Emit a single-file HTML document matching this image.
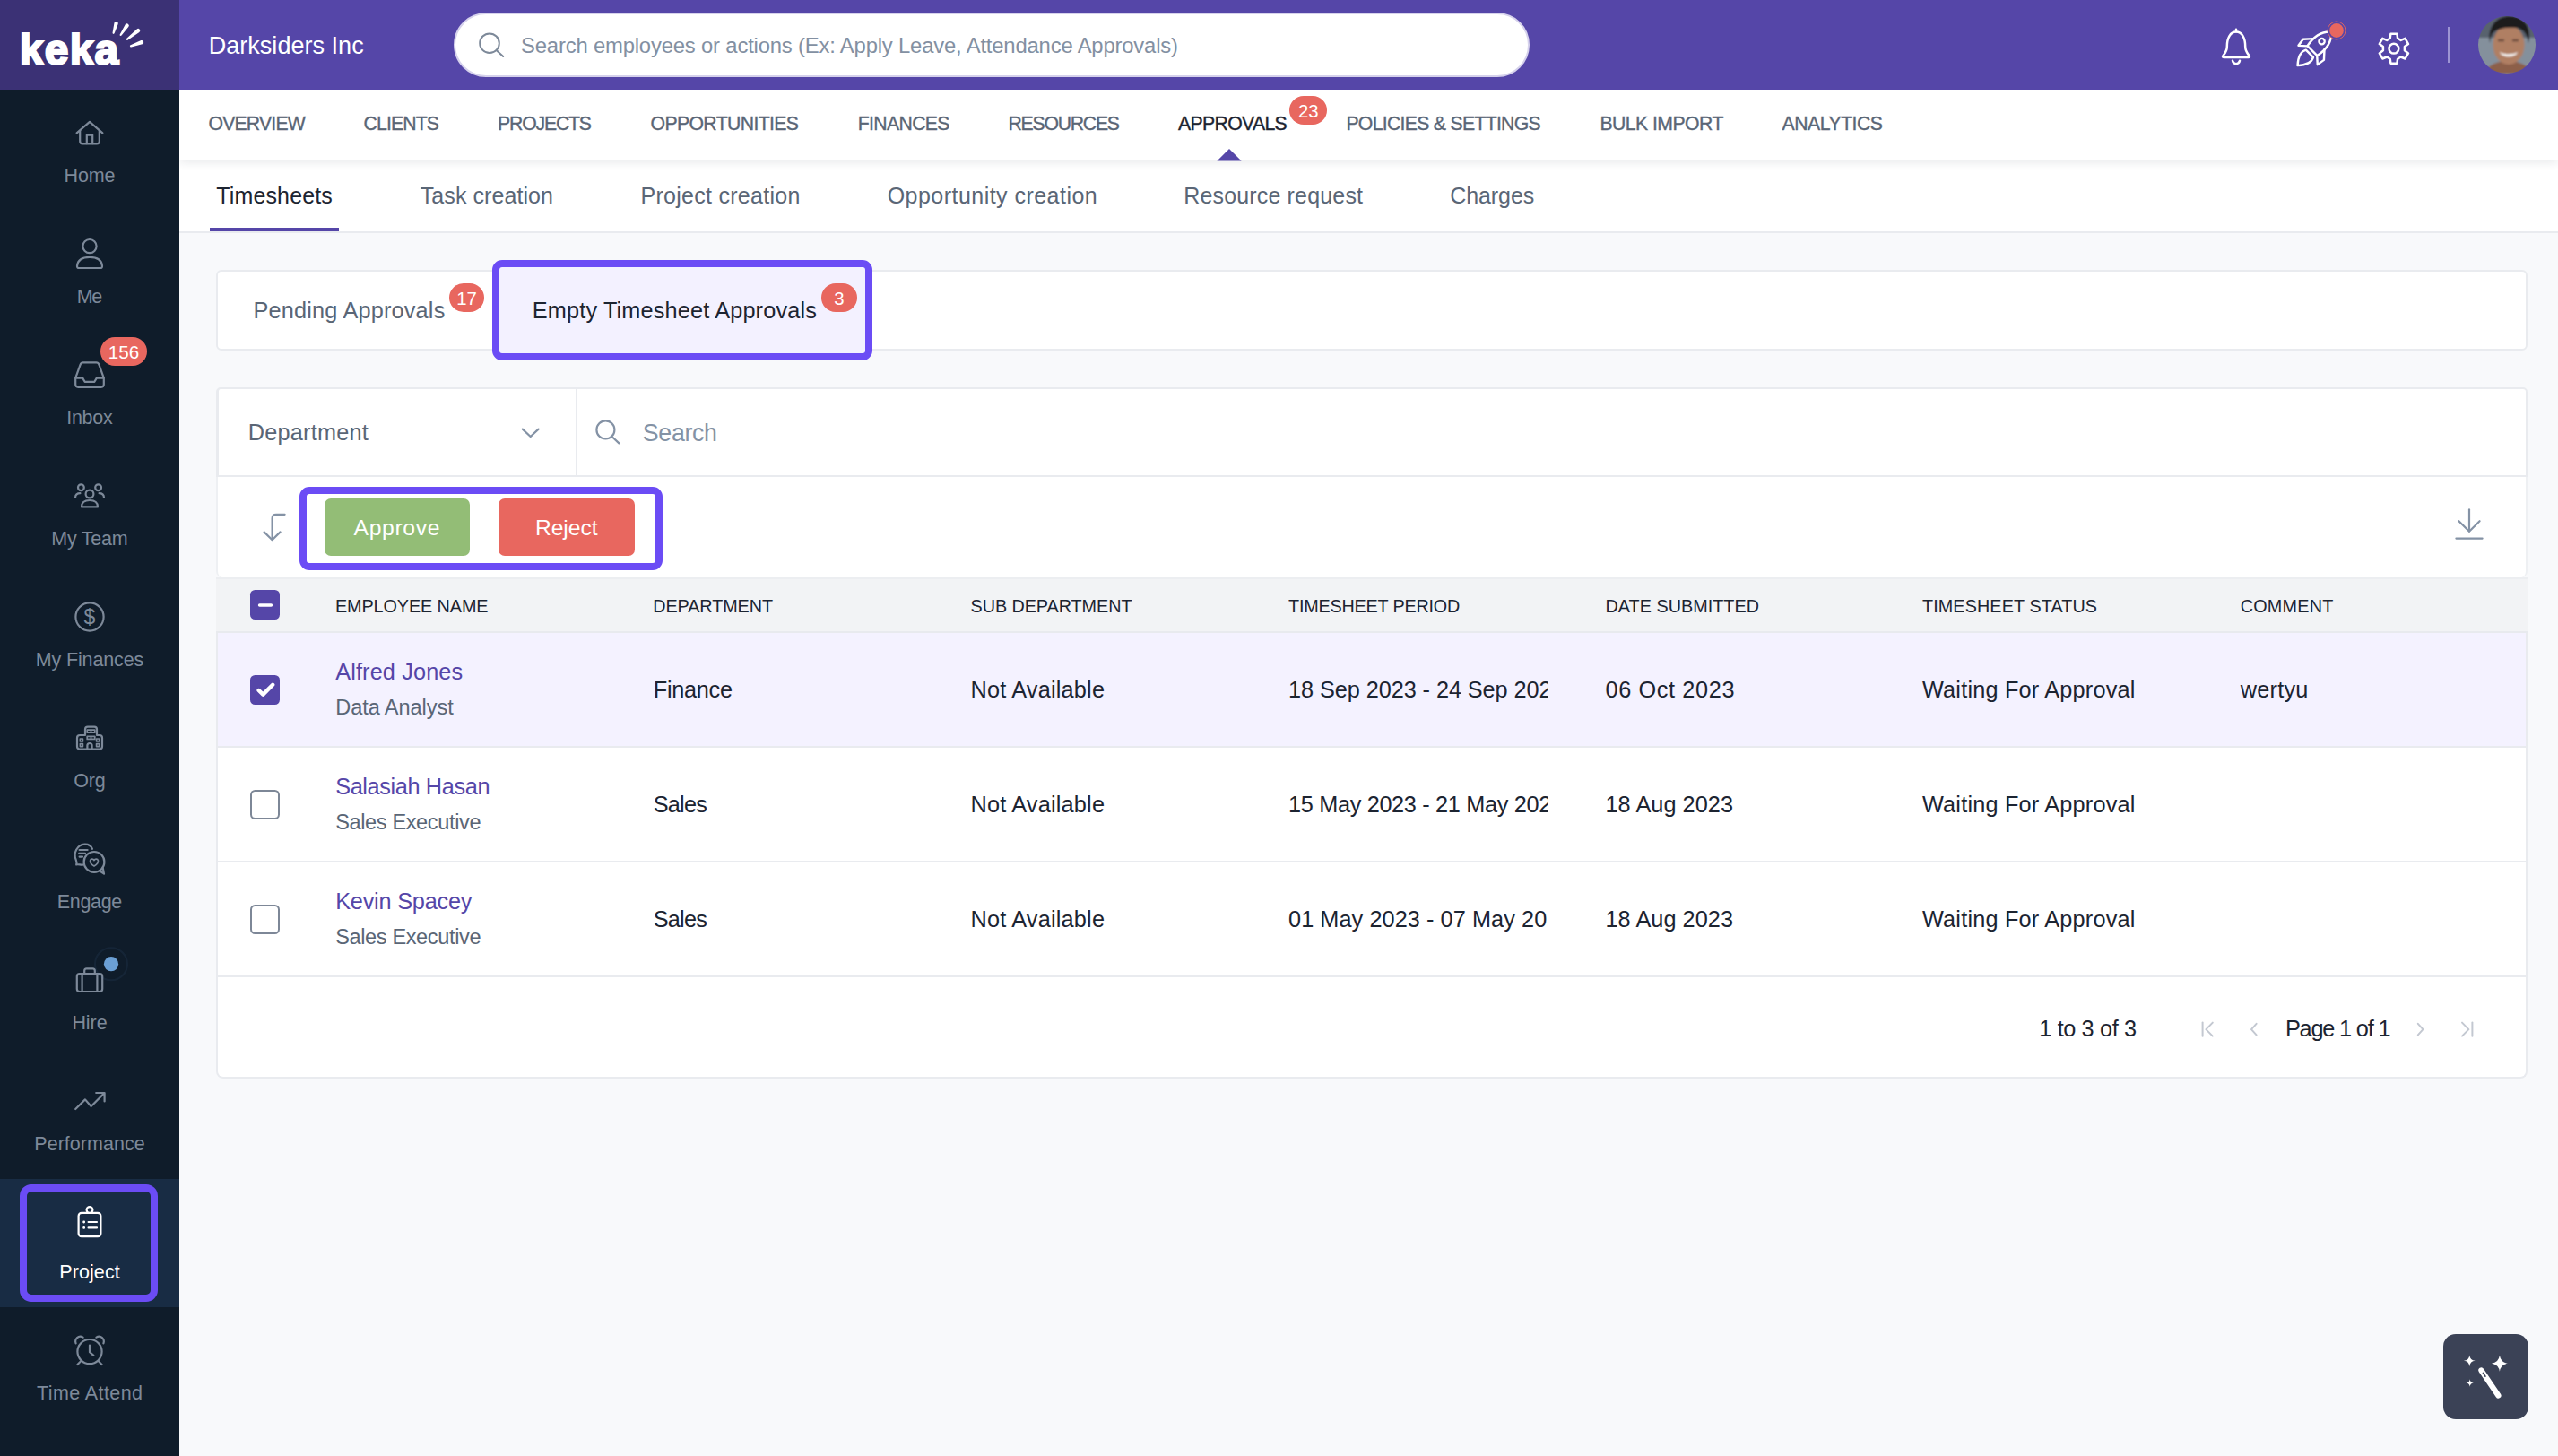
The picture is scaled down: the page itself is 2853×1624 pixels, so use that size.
<!DOCTYPE html>
<html lang="en">
<head>
<meta charset="utf-8">
<title>Keka - Project Approvals - Timesheets</title>
<style>
*{box-sizing:border-box;margin:0;padding:0}
html,body{width:2853px;height:1624px;overflow:hidden}
body{position:relative;background:#f8f9fb;font-family:"Liberation Sans",sans-serif}
.a{position:absolute}
.t{position:absolute;white-space:nowrap;font-family:"Liberation Sans",sans-serif}
#side{left:0;top:100px;width:200px;height:1524px;background:#0f1c2a}
#logo{left:0;top:0;width:200px;height:100px;background:#3b3175}
#top{left:200px;top:0;width:2653px;height:100px;background:#5546a8}
#gsearch{left:506px;top:14px;width:1200px;height:72px;border-radius:36px;background:#fff;border:2px solid #d6d2ec}
#nav{left:200px;top:100px;width:2653px;height:78px;background:#fff;box-shadow:0 3px 10px rgba(30,40,60,.10)}
#subs{left:200px;top:178px;width:2653px;height:82px;background:#fff;border-bottom:2px solid #e9ebef}
#uline{left:234px;top:254px;width:144px;height:4px;background:#5546a8}
.card{background:#fff;border:2px solid #e9ebef}
#c1{left:241px;top:301px;width:2578px;height:90px;border-radius:6px}
#hl1{left:549px;top:290px;width:424px;height:112px;border:8px solid #6b4cf5;border-radius:11px;background:#f3f1ff}
#filter{left:241px;top:432px;width:2578px;height:100px;border-left-width:3px;border-radius:5px 5px 0 0}
#fdiv{left:642px;top:434px;width:2px;height:96px;background:#e9ebef}
#tool{left:241px;top:530px;width:2578px;height:114px;border-top:0;border-bottom:0;border-radius:0 0 7px 7px;border-color:#eef0f3}
#hl2{left:334px;top:543px;width:404.5px;height:92.5px;border:8px solid #6b4cf5;border-radius:11px}
.btn{border-radius:7px;height:64px;top:556px}
#ok{left:362px;width:162px;background:#93bd76}
#no{left:556px;width:152px;background:#e8675f}
#tbl{left:241px;top:644px;width:2578px;height:559px;border-radius:0 0 8px 8px;border-top:0}
#th{left:241px;top:644px;width:2578px;height:62px;background:#f2f3f5;border-top:2px solid #eceef1;border-bottom:2px solid #e8eaee}
#r1{left:243px;top:706px;width:2574px;height:126px;background:#f4f2ff}
.hr{left:243px;width:2574px;height:2px;background:#e9ebef}
.cb{left:279px;width:33px;height:33px;border-radius:5.5px}
.cb.on{background:#5546a8}
.cb.off{border:2.6px solid #7d8797;background:#fff}
.badge{background:#e8675f;border-radius:16px;height:32px}
#magic{left:2724.5px;top:1488px;width:95px;height:95px;border-radius:14px;background:#3b4256}
#act{left:0;top:1315px;width:200px;height:143px;background:#182c44}
#hl3{left:21.6px;top:1321px;width:154.6px;height:131px;border:8px solid #6b4cf5;border-radius:13px}
svg{position:absolute;left:0;top:0;overflow:visible}
.si{fill:none;stroke:#7d8999;stroke-width:2.2;stroke-linecap:round;stroke-linejoin:round}
.wi{fill:none;stroke:#fff;stroke-width:2.5;stroke-linecap:round;stroke-linejoin:round}
.gi{fill:none;stroke:#8492a5;stroke-width:2.2;stroke-linecap:round;stroke-linejoin:round}
.pi{fill:none;stroke:#c3c8d1;stroke-width:2;stroke-linecap:round;stroke-linejoin:round}
</style>
</head>
<body>
<div class="a" id="subs"></div>
<div class="a" id="uline"></div>
<div class="a" id="nav"></div>
<div class="a" id="top"></div>
<div class="a" id="logo"></div>
<div class="a" id="side"></div>
<div class="a" id="act"></div>
<div class="a" id="hl3"></div>
<div class="a" id="gsearch"></div>

<div class="a card" id="c1"></div>
<div class="a" id="hl1"></div>
<div class="a card" id="tool"></div>
<div class="a card" id="filter"></div>
<div class="a" id="fdiv"></div>
<div class="a" id="hl2"></div>
<div class="a btn" id="ok"></div>
<div class="a btn" id="no"></div>
<div class="a card" id="tbl"></div>
<div class="a" id="th"></div>
<div class="a" id="r1"></div>
<div class="a hr" style="top:832px"></div>
<div class="a hr" style="top:960px"></div>
<div class="a hr" style="top:1088px"></div>
<div class="a cb on" style="top:658px"></div>
<div class="a cb on" style="top:752.5px"></div>
<div class="a cb off" style="top:880.5px"></div>
<div class="a cb off" style="top:1008.5px"></div>

<div class="a badge" style="left:112px;top:376px;width:52px"></div>
<div class="a badge" style="left:1438.3px;top:107px;width:42px"></div>
<div class="a badge" style="left:500.8px;top:315.8px;width:39.7px"></div>
<div class="a badge" style="left:915.8px;top:316.2px;width:40px"></div>
<div class="a" id="magic"></div>

<svg width="2853" height="1624" viewBox="0 0 2853 1624">
<!-- logo rays -->
<g fill="#fff">
<path d="M127.48 25.60 L125.54 36.50 A1.1 1.1 0 0 0 127.66 37.10 L131.72 26.80 A2.2 2.2 0 0 0 127.48 25.60 Z"/><path d="M139.77 27.37 L133.69 38.39 A1.1 1.1 0 0 0 135.51 39.61 L143.43 29.83 A2.2 2.2 0 0 0 139.77 27.37 Z"/><path d="M152.64 32.47 L141.12 42.94 A1.1 1.1 0 0 0 142.48 44.66 L155.36 35.93 A2.2 2.2 0 0 0 152.64 32.47 Z"/><path d="M157.27 45.12 L145.64 50.36 A1.1 1.1 0 0 0 146.36 52.44 L158.73 49.28 A2.2 2.2 0 0 0 157.27 45.12 Z"/>
</g>
<!-- nav active triangle -->
<path d="M1357.4 179.5 L1371 166 L1384.6 179.5 Z" fill="#5546a8"/>
<!-- global search icon -->
<g class="si" style="stroke-width:2"><circle cx="546" cy="48.2" r="10.8"/><path d="M553.6 55.9 L561.2 63"/></g>
<!-- bell -->
<g class="wi"><path d="M2494 32.8 V35.2"/><path d="M2483.8 52 C2483.8 42 2487.6 35.6 2494 35.6 C2500.4 35.6 2504.2 42 2504.2 52 C2504.2 57 2506.6 59.6 2508.6 62.2 C2509.4 63.4 2508.8 64 2507.6 64 H2480.4 C2479.2 64 2478.6 63.4 2479.4 62.2 C2481.4 59.6 2483.8 57 2483.8 52 Z"/><path d="M2490 67.8 C2490.6 70.2 2492.2 71.2 2494 71.2 C2495.8 71.2 2497.4 70.2 2498 67.8"/></g>
<!-- rocket -->
<g class="wi" transform="translate(2583.4 52.2) rotate(45) scale(0.965)">
<path d="M0 -24.5 C8.6 -17 10.4 -5 8 6.5 L-8 6.5 C-10.4 -5 -8.6 -17 0 -24.5 Z"/>
<circle cx="0" cy="-9" r="3.3" stroke-width="2.4"/>
<path d="M-8.8 -4.5 L-17 4.5 L-15.6 13.6 L-8 6.8"/>
<path d="M8.8 -4.5 L17 4.5 L15.6 13.6 L8 6.8"/>
<path d="M-6 11 C-9.6 17.6 -5.4 24.6 0 30.6 C5.4 24.6 9.6 17.6 6 11 Z"/>
</g>
<circle cx="2606" cy="34" r="10" fill="#5546a8" stroke="#e8675f" stroke-width="0.9"/>
<circle cx="2606" cy="34" r="7.9" fill="#e8675f"/>
<!-- gear -->
<g class="wi"><path d="M2665.7 42.7 L2666.4 37.7 L2673.4 37.7 L2674.1 42.7 L2677.7 44.9 L2682.5 42.9 L2686.0 49.0 L2681.9 52.1 L2681.9 56.3 L2686.0 59.4 L2682.5 65.5 L2677.7 63.5 L2674.1 65.7 L2673.4 70.7 L2666.4 70.7 L2665.7 65.7 L2662.1 63.5 L2657.3 65.5 L2653.8 59.4 L2657.9 56.3 L2657.9 52.1 L2653.8 49.0 L2657.3 42.9 L2662.1 44.9 Z" stroke-linejoin="round"/><circle cx="2669.9" cy="54.2" r="5.4"/></g>
<!-- top divider -->
<rect x="2730" y="30" width="2" height="40" fill="#9d94d3"/>
<!-- avatar -->
<g>
<clipPath id="av"><circle cx="2796" cy="50" r="32"/></clipPath><filter id="avb" x="-10%" y="-10%" width="120%" height="120%"><feGaussianBlur stdDeviation="1.3"/></filter>
<g clip-path="url(#av)"><g filter="url(#avb)">
<rect x="2754" y="8" width="84" height="84" fill="#84909c"/>
<rect x="2754" y="8" width="84" height="34" fill="#59626e"/>
<path d="M2772 82 C2774 72 2786 68 2797 68 C2808 68 2820 72 2824 82 Z" fill="#8c5f4a"/>
<ellipse cx="2798" cy="50" rx="17.5" ry="22" fill="#b07f63"/>
<path d="M2777 48 C2774 30 2784 18 2799 18 C2815 18 2824 30 2820 48 C2819 38 2814 32 2806 31 C2797 30 2786 31 2780 37 C2778 40 2777.5 44 2777 48 Z" fill="#1c1a1d"/>
<path d="M2788 58 C2793 61 2803 61 2808 58 C2806 65 2790 65 2788 58 Z" fill="#f3efec"/>
<path d="M2786 45 h7 M2802 45 h7" stroke="#4a332b" stroke-width="2.4" stroke-opacity=".7" fill="none"/>
</g></g>
</g>
<!-- sidebar: home -->
<g class="si"><path d="M85.6 148.4 L100 135.8 L114.4 148.4"/><path d="M89.2 146 V157.4 Q89.2 160.4 92.2 160.4 H107.8 Q110.8 160.4 110.8 157.4 V146"/><path d="M96.8 160.2 V150.6 H103.2 V160.2"/></g>
<!-- me -->
<g class="si"><circle cx="100" cy="274.6" r="7.6"/><path d="M86 296.6 C86.6 290 92 286.8 100 286.8 C108 286.8 113.4 290 114 296.6 Q114.2 299 111.8 299 H88.2 Q85.8 299 86 296.6 Z"/></g>
<!-- inbox -->
<g class="si"><path d="M84.2 421.6 L89.6 406.6 Q90.4 404.4 92.6 404.4 H107.4 Q109.6 404.4 110.4 406.6 L115.8 421.6 V428.8 Q115.8 431.8 112.8 431.8 H87.2 Q84.2 431.8 84.2 428.8 Z"/><path d="M84.4 421.6 H92.2 L94.6 425.8 H105.4 L107.8 421.6 H115.6"/></g>
<!-- my team -->
<g class="si" stroke-width="2"><circle cx="100" cy="551" r="4.4"/><circle cx="90.4" cy="543.8" r="3.4"/><circle cx="109.6" cy="543.8" r="3.4"/>
<path d="M91 565.4 C91 560.4 94.6 558 100 558 C105.4 558 109 560.4 109 565.4 Z"/>
<path d="M84 555 C84.2 551.6 86.2 550.2 89.4 550.2"/><path d="M116 555 C115.8 551.6 113.8 550.2 110.6 550.2"/></g>
<!-- my finances -->
<g class="si"><circle cx="100" cy="688" r="15.6"/></g>
<text x="100" y="696.2" text-anchor="middle" font-family="Liberation Sans, sans-serif" font-size="23" fill="#7d8999">$</text>
<!-- org -->
<g class="si" stroke-width="2"><path d="M86 823 Q86 820 89 820 H95 V813.4 Q95 810.6 97.8 810.6 H105.2 Q108 810.6 108 813.4 V820 H111 Q114 820 114 823 V832.6 Q114 835.6 111 835.6 H89 Q86 835.6 86 832.6 Z"/>
<path d="M97.4 835.4 V831.6 Q97.4 829 100 829 Q102.6 829 102.6 831.6 V835.4"/>
<g stroke-width="1.7"><rect x="89.4" y="824" width="3" height="3"/><rect x="89.4" y="829.6" width="3" height="3"/><rect x="107.6" y="824" width="3" height="3"/><rect x="107.6" y="829.6" width="3" height="3"/>
<rect x="97.2" y="814.2" width="8.6" height="3"/><rect x="97.2" y="821.4" width="8.6" height="3"/><path d="M101.5 814.2 v3 M101.5 821.4 v3"/></g></g>
<!-- engage -->
<g class="si" stroke-width="1.9"><path d="M92.4 964.6 C89.4 964.8 87.6 963.8 85.2 964.4 C86 962.4 85.6 961 84.6 958.6 C81.6 951.8 85.8 942.2 94.4 941.6 C98.6 941.4 101.6 943.4 103 946.8"/>
<path d="M88.6 948 H97.6 M88.2 951.8 H95 M88.6 955.6 H92"/>
<circle cx="105" cy="961.4" r="11.4"/><path d="M111 971.4 L116 974.6 L114.8 968.4" /><path d="M105 966 C101.6 964 100 962 100.6 959.8 C101.2 957.8 104 957.6 105 959.6 C106 957.6 108.8 957.8 109.4 959.8 C110 962 108.4 964 105 966 Z" stroke-width="1.7"/></g>
<!-- hire -->
<g class="si"><rect x="85.8" y="1086.2" width="28.4" height="19.8" rx="3"/><path d="M94.2 1086 V1082.8 Q94.2 1080.4 96.6 1080.4 H103.4 Q105.8 1080.4 105.8 1082.8 V1086"/><path d="M91.6 1086.4 V1105.8 M108.4 1086.4 V1105.8"/></g>
<circle cx="124" cy="1075.2" r="18" fill="none" stroke="#6b9fd4" stroke-opacity=".08" stroke-width="2"/>
<circle cx="124" cy="1075.2" r="8.1" fill="#6b9fd4"/>
<!-- performance -->
<g class="si"><path d="M84.2 1237 L95 1226.4 L101.6 1234 L116 1219.6"/><path d="M107.2 1219 H116.6 V1228.4"/></g>
<!-- project (active) -->
<g class="si" style="stroke:#fff"><rect x="87.6" y="1352.8" width="24.8" height="26.4" rx="3.4"/>
<circle cx="100" cy="1349.5" r="3.4" fill="#182c44"/>
<path d="M98.6 1363 H108 M98.6 1369.4 H108"/><path d="M93.6 1363 h.1 M93.6 1369.4 h.1" stroke-width="2.8"/></g>
<!-- time attend -->
<g class="si"><circle cx="100" cy="1507.6" r="13.6"/><path d="M100 1500.6 V1508.2 L104.4 1511.8"/><path d="M90.4 1518 L86.4 1522 M109.6 1518 L113.6 1522"/>
<path d="M84.6 1498.4 C82.8 1493.6 87.6 1488.6 92.6 1491.6"/><path d="M115.4 1498.4 C117.2 1493.6 112.4 1488.6 107.4 1491.6"/></g>
<!-- filter chevron + search -->
<g class="gi" stroke="#5a6676" stroke-width="2"><path d="M582.8 478.6 L591.7 487 L600.6 478.6"/></g>
<g class="gi"><circle cx="675.4" cy="479.4" r="10"/><path d="M682.8 487.2 L690.4 494.4"/></g>
<!-- sort icon -->
<g class="gi" stroke-width="2"><path d="M317.6 573.8 H308 Q303.6 573.8 303.6 578.2 V601.6"/><path d="M294.6 593.4 L303.6 602.2 L312.6 593.4"/></g>
<!-- download -->
<g class="gi" stroke-width="2"><path d="M2754 568.4 V592.6"/><path d="M2742.4 581.2 L2754 592.8 L2765.6 581.2"/><path d="M2739.4 600.6 H2768.6"/></g>
<!-- checkbox marks -->
<path d="M289.6 675 H302.4" stroke="#fff" stroke-width="3.6" stroke-linecap="round"/>
<path d="M288.6 770 L293.4 774.6 L304.2 763.8" stroke="#fff" stroke-width="4.4" stroke-linecap="round" stroke-linejoin="round" fill="none"/>
<!-- pagination -->
<g class="pi"><path d="M2456.6 1140.4 V1155.8"/><path d="M2467.8 1140.6 L2460.4 1148.1 L2467.8 1155.6"/>
<path d="M2516.6 1141.8 L2511 1148.1 L2516.6 1154.4"/>
<path d="M2696.8 1141.8 L2702.4 1148.1 L2696.8 1154.4"/>
<path d="M2746 1140.6 L2753.4 1148.1 L2746 1155.6"/><path d="M2757.4 1140.4 V1155.8"/></g>
<!-- magic wand -->
<g fill="#fff"><path d="M2767.4 1528.4 L2786.4 1556.4" stroke="#fff" stroke-width="6.2" stroke-linecap="round"/><path d="M2769.4 1531.4 L2772 1535.2" stroke="#3b4256" stroke-width="1.6" stroke-linecap="round"/>
<path d="M2787.9 1511.8 Q2789 1519.7 2796.9 1520.8 Q2789 1521.9 2787.9 1529.8 Q2786.8 1521.9 2778.9 1520.8 Q2786.8 1519.7 2787.9 1511.8 Z"/>
<path d="M2754.3 1511.4 Q2754.8 1517.3 2760.7 1517.8 Q2754.8 1518.3 2754.3 1524.2 Q2753.8 1518.3 2747.9 1517.8 Q2753.8 1517.3 2754.3 1511.4 Z"/>
<path d="M2754.7 1538.3 Q2755 1542.2 2758.9 1542.5 Q2755 1542.8 2754.7 1546.7 Q2754.4 1542.8 2750.5 1542.5 Q2754.4 1542.2 2754.7 1538.3 Z"/></g>

</svg>
<span class="t" style="top:32.21px;font-size:48px;line-height:48px;color:#ffffff;letter-spacing:1.240px;left:21.80px;font-weight:bold;-webkit-text-stroke:2.2px #fff;">keka</span>
<span class="t" style="top:38.31px;font-size:27.03px;line-height:27.03px;color:#ffffff;letter-spacing:0.026px;left:232.70px;">Darksiders Inc</span>
<span class="t" style="top:39.41px;font-size:23.84px;line-height:23.84px;color:#8390a2;letter-spacing:-0.173px;left:581.00px;">Search employees or actions (Ex: Apply Leave, Attendance Approvals)</span>
<span class="t" style="top:127.21px;font-size:21.22px;line-height:21.22px;color:#5a6676;letter-spacing:-0.812px;left:232.50px;-webkit-text-stroke:0.35px #5a6676;">OVERVIEW</span>
<span class="t" style="top:127.21px;font-size:21.22px;line-height:21.22px;color:#5a6676;letter-spacing:-0.854px;left:405.50px;-webkit-text-stroke:0.35px #5a6676;">CLIENTS</span>
<span class="t" style="top:127.21px;font-size:21.22px;line-height:21.22px;color:#5a6676;letter-spacing:-1.170px;left:555.00px;-webkit-text-stroke:0.35px #5a6676;">PROJECTS</span>
<span class="t" style="top:127.21px;font-size:21.22px;line-height:21.22px;color:#5a6676;letter-spacing:-0.618px;left:725.50px;-webkit-text-stroke:0.35px #5a6676;">OPPORTUNITIES</span>
<span class="t" style="top:127.21px;font-size:21.22px;line-height:21.22px;color:#5a6676;letter-spacing:-0.642px;left:956.70px;-webkit-text-stroke:0.35px #5a6676;">FINANCES</span>
<span class="t" style="top:127.21px;font-size:21.22px;line-height:21.22px;color:#5a6676;letter-spacing:-1.240px;left:1124.50px;-webkit-text-stroke:0.35px #5a6676;">RESOURCES</span>
<span class="t" style="top:127.21px;font-size:21.22px;line-height:21.22px;color:#1c2431;letter-spacing:-0.661px;left:1314.00px;-webkit-text-stroke:0.35px #1c2431;">APPROVALS</span>
<span class="t" style="top:127.21px;font-size:21.22px;line-height:21.22px;color:#5a6676;letter-spacing:-0.702px;left:1501.40px;-webkit-text-stroke:0.35px #5a6676;">POLICIES &amp; SETTINGS</span>
<span class="t" style="top:127.21px;font-size:21.22px;line-height:21.22px;color:#5a6676;letter-spacing:-0.547px;left:1784.40px;-webkit-text-stroke:0.35px #5a6676;">BULK IMPORT</span>
<span class="t" style="top:127.21px;font-size:21.22px;line-height:21.22px;color:#5a6676;letter-spacing:-0.493px;left:1987.60px;-webkit-text-stroke:0.35px #5a6676;">ANALYTICS</span>
<span class="t" style="top:114.21px;font-size:20.35px;line-height:20.35px;color:#ffffff;left:1259.30px;width:400px;text-align:center;">23</span>
<span class="t" style="top:206.21px;font-size:25.0px;line-height:25.0px;color:#1c2431;letter-spacing:0.134px;left:241.30px;">Timesheets</span>
<span class="t" style="top:206.21px;font-size:25.0px;line-height:25.0px;color:#5a6676;letter-spacing:0.075px;left:468.80px;">Task creation</span>
<span class="t" style="top:206.21px;font-size:25.0px;line-height:25.0px;color:#5a6676;letter-spacing:0.273px;left:714.50px;">Project creation</span>
<span class="t" style="top:206.21px;font-size:25.0px;line-height:25.0px;color:#5a6676;letter-spacing:0.467px;left:989.70px;">Opportunity creation</span>
<span class="t" style="top:206.21px;font-size:25.0px;line-height:25.0px;color:#5a6676;letter-spacing:0.165px;left:1320.20px;">Resource request</span>
<span class="t" style="top:206.21px;font-size:25.0px;line-height:25.0px;color:#5a6676;letter-spacing:-0.100px;left:1617.30px;">Charges</span>
<span class="t" style="top:334.22px;font-size:25.29px;line-height:25.29px;color:#5a6676;letter-spacing:0.185px;left:282.50px;">Pending Approvals</span>
<span class="t" style="top:334.22px;font-size:25.29px;line-height:25.29px;color:#1c2431;letter-spacing:0.152px;left:593.80px;">Empty Timesheet Approvals</span>
<span class="t" style="top:322.51px;font-size:20.35px;line-height:20.35px;color:#ffffff;left:320.60px;width:400px;text-align:center;">17</span>
<span class="t" style="top:322.80px;font-size:20.35px;line-height:20.35px;color:#ffffff;left:735.80px;width:400px;text-align:center;">3</span>
<span class="t" style="top:470.41px;font-size:25.29px;line-height:25.29px;color:#5a6676;letter-spacing:0.212px;left:276.80px;">Department</span>
<span class="t" style="top:469.81px;font-size:26.74px;line-height:26.74px;color:#8492a5;letter-spacing:-0.304px;left:716.80px;">Search</span>
<span class="t" style="top:577.00px;font-size:24.71px;line-height:24.71px;color:#ffffff;letter-spacing:0.664px;left:394.50px;">Approve</span>
<span class="t" style="top:577.00px;font-size:24.71px;line-height:24.71px;color:#ffffff;letter-spacing:-0.106px;left:597.00px;">Reject</span>
<span class="t" style="top:666.60px;font-size:19.77px;line-height:19.77px;color:#1c2431;letter-spacing:-0.072px;left:374.00px;">EMPLOYEE NAME</span>
<span class="t" style="top:666.60px;font-size:19.77px;line-height:19.77px;color:#1c2431;letter-spacing:-0.073px;left:728.30px;">DEPARTMENT</span>
<span class="t" style="top:666.60px;font-size:19.77px;line-height:19.77px;color:#1c2431;letter-spacing:-0.037px;left:1082.50px;">SUB DEPARTMENT</span>
<span class="t" style="top:666.60px;font-size:19.77px;line-height:19.77px;color:#1c2431;letter-spacing:-0.182px;left:1437.00px;">TIMESHEET PERIOD</span>
<span class="t" style="top:666.60px;font-size:19.77px;line-height:19.77px;color:#1c2431;letter-spacing:0.042px;left:1790.50px;">DATE SUBMITTED</span>
<span class="t" style="top:666.60px;font-size:19.77px;line-height:19.77px;color:#1c2431;letter-spacing:0.114px;left:2144.00px;">TIMESHEET STATUS</span>
<span class="t" style="top:666.60px;font-size:19.77px;line-height:19.77px;color:#1c2431;letter-spacing:0.246px;left:2498.70px;">COMMENT</span>
<span class="t" style="top:736.81px;font-size:25.29px;line-height:25.29px;color:#5546a8;letter-spacing:0.134px;left:374.20px;">Alfred Jones</span>
<span class="t" style="top:778.01px;font-size:23.55px;line-height:23.55px;color:#5a6676;letter-spacing:-0.064px;left:374.20px;">Data Analyst</span>
<span class="t" style="top:757.31px;font-size:25.29px;line-height:25.29px;color:#1c2431;letter-spacing:-0.292px;left:728.80px;">Finance</span>
<span class="t" style="top:757.31px;font-size:25.29px;line-height:25.29px;color:#1c2431;letter-spacing:0.199px;left:1082.50px;">Not Available</span>
<div class="t" style="left:1437.00px;top:751.31px;width:288.6px;height:37.29px;overflow:hidden"><span class="t" style="top:6px;font-size:25.29px;line-height:25.29px;color:#1c2431;letter-spacing:-0.069px;left:0;">18 Sep 2023 - 24 Sep 2023</span></div>
<span class="t" style="top:757.31px;font-size:25.29px;line-height:25.29px;color:#1c2431;letter-spacing:0.625px;left:1790.50px;">06 Oct 2023</span>
<span class="t" style="top:757.31px;font-size:25.29px;line-height:25.29px;color:#1c2431;letter-spacing:0.194px;left:2144.00px;">Waiting For Approval</span>
<span class="t" style="top:757.31px;font-size:25.29px;line-height:25.29px;color:#1c2431;letter-spacing:0.246px;left:2498.70px;">wertyu</span>
<span class="t" style="top:864.81px;font-size:25.29px;line-height:25.29px;color:#5546a8;letter-spacing:-0.369px;left:374.20px;">Salasiah Hasan</span>
<span class="t" style="top:906.01px;font-size:23.55px;line-height:23.55px;color:#5a6676;letter-spacing:-0.374px;left:374.20px;">Sales Executive</span>
<span class="t" style="top:885.31px;font-size:25.29px;line-height:25.29px;color:#1c2431;letter-spacing:-0.812px;left:728.80px;">Sales</span>
<span class="t" style="top:885.31px;font-size:25.29px;line-height:25.29px;color:#1c2431;letter-spacing:0.199px;left:1082.50px;">Not Available</span>
<div class="t" style="left:1437.00px;top:879.31px;width:288.6px;height:37.29px;overflow:hidden"><span class="t" style="top:6px;font-size:25.29px;line-height:25.29px;color:#1c2431;letter-spacing:-0.326px;left:0;">15 May 2023 - 21 May 2023</span></div>
<span class="t" style="top:885.31px;font-size:25.29px;line-height:25.29px;color:#1c2431;letter-spacing:0.050px;left:1790.50px;">18 Aug 2023</span>
<span class="t" style="top:885.31px;font-size:25.29px;line-height:25.29px;color:#1c2431;letter-spacing:0.194px;left:2144.00px;">Waiting For Approval</span>
<span class="t" style="top:992.81px;font-size:25.29px;line-height:25.29px;color:#5546a8;letter-spacing:-0.218px;left:374.20px;">Kevin Spacey</span>
<span class="t" style="top:1034.01px;font-size:23.55px;line-height:23.55px;color:#5a6676;letter-spacing:-0.374px;left:374.20px;">Sales Executive</span>
<span class="t" style="top:1013.31px;font-size:25.29px;line-height:25.29px;color:#1c2431;letter-spacing:-0.812px;left:728.80px;">Sales</span>
<span class="t" style="top:1013.31px;font-size:25.29px;line-height:25.29px;color:#1c2431;letter-spacing:0.199px;left:1082.50px;">Not Available</span>
<div class="t" style="left:1437.00px;top:1007.31px;width:288.6px;height:37.29px;overflow:hidden"><span class="t" style="top:6px;font-size:25.29px;line-height:25.29px;color:#1c2431;letter-spacing:0.070px;left:0;">01 May 2023 - 07 May 2023</span></div>
<span class="t" style="top:1013.31px;font-size:25.29px;line-height:25.29px;color:#1c2431;letter-spacing:0.050px;left:1790.50px;">18 Aug 2023</span>
<span class="t" style="top:1013.31px;font-size:25.29px;line-height:25.29px;color:#1c2431;letter-spacing:0.194px;left:2144.00px;">Waiting For Approval</span>
<span class="t" style="top:1134.61px;font-size:25.29px;line-height:25.29px;color:#1c2431;letter-spacing:-0.375px;left:2274.30px;">1 to 3 of 3</span>
<span class="t" style="top:1134.61px;font-size:25.29px;line-height:25.29px;color:#1c2431;letter-spacing:-1.173px;left:2548.90px;">Page 1 of 1</span>
<span class="t" style="top:186.30px;font-size:21.51px;line-height:21.51px;color:#7d8999;letter-spacing:-0.186px;left:-100.00px;width:400px;text-align:center;text-indent:-0.186px;">Home</span>
<span class="t" style="top:321.41px;font-size:21.51px;line-height:21.51px;color:#7d8999;letter-spacing:-1.275px;left:-100.00px;width:400px;text-align:center;text-indent:-1.275px;">Me</span>
<span class="t" style="top:456.30px;font-size:21.51px;line-height:21.51px;color:#7d8999;letter-spacing:-0.302px;left:-100.00px;width:400px;text-align:center;text-indent:-0.302px;">Inbox</span>
<span class="t" style="top:591.30px;font-size:21.51px;line-height:21.51px;color:#7d8999;letter-spacing:-0.255px;left:-100.00px;width:400px;text-align:center;text-indent:-0.255px;">My Team</span>
<span class="t" style="top:726.30px;font-size:21.51px;line-height:21.51px;color:#7d8999;letter-spacing:-0.138px;left:-100.00px;width:400px;text-align:center;text-indent:-0.138px;">My Finances</span>
<span class="t" style="top:861.30px;font-size:21.51px;line-height:21.51px;color:#7d8999;letter-spacing:-0.272px;left:-100.00px;width:400px;text-align:center;text-indent:-0.272px;">Org</span>
<span class="t" style="top:996.30px;font-size:21.51px;line-height:21.51px;color:#7d8999;letter-spacing:-0.308px;left:-100.00px;width:400px;text-align:center;text-indent:-0.308px;">Engage</span>
<span class="t" style="top:1131.41px;font-size:21.51px;line-height:21.51px;color:#7d8999;letter-spacing:-0.074px;left:-100.00px;width:400px;text-align:center;text-indent:-0.074px;">Hire</span>
<span class="t" style="top:1266.30px;font-size:21.51px;line-height:21.51px;color:#7d8999;letter-spacing:0.021px;left:-100.00px;width:400px;text-align:center;text-indent:0.021px;">Performance</span>
<span class="t" style="top:1409.41px;font-size:21.51px;line-height:21.51px;color:#ffffff;letter-spacing:0.080px;left:-100.00px;width:400px;text-align:center;text-indent:0.080px;">Project</span>
<span class="t" style="top:1544.21px;font-size:21.51px;line-height:21.51px;color:#7d8999;letter-spacing:0.406px;left:-100.00px;width:400px;text-align:center;text-indent:0.406px;">Time Attend</span>
<span class="t" style="top:382.61px;font-size:20.64px;line-height:20.64px;color:#ffffff;left:-62.00px;width:400px;text-align:center;">156</span>
</body>
</html>
